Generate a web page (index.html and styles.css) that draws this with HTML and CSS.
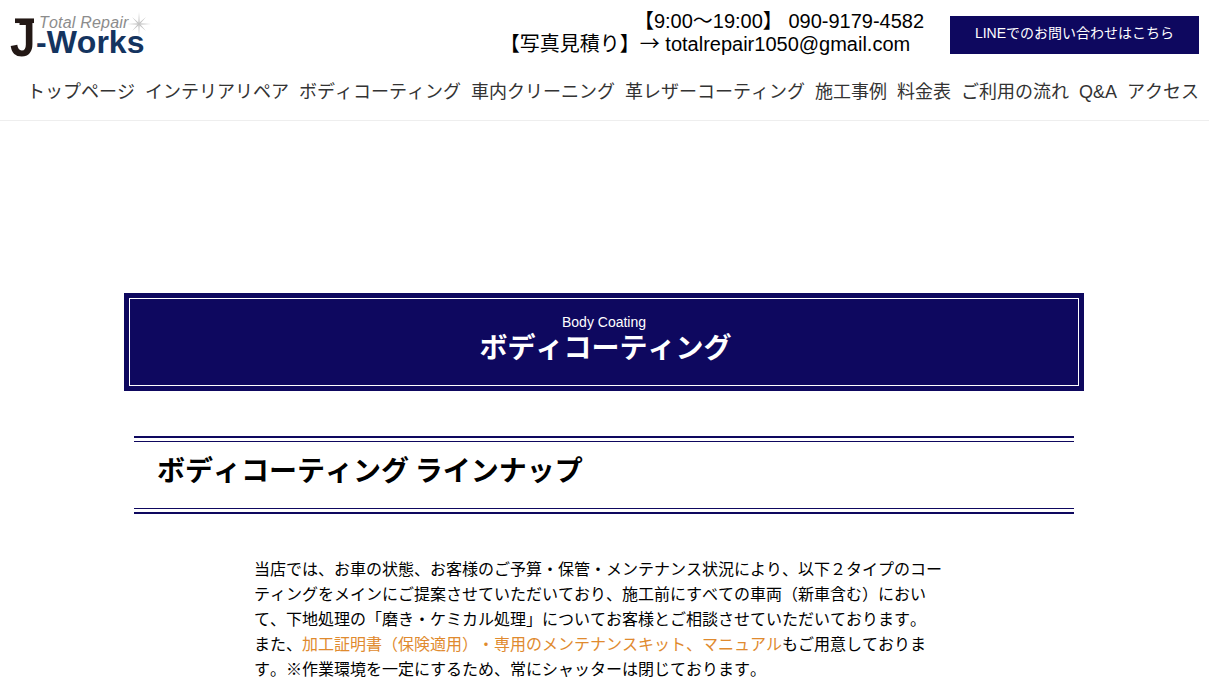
FILE: index.html
```html
<!DOCTYPE html>
<html lang="ja">
<head>
    <meta charset="UTF-8">
    <meta name="viewport" content="width=device-width, initial-scale=1.0">
    <title>ボディコーティング | J-Works</title>
    <link rel="stylesheet" href="styles.css">
</head>
<body>

    <header class="site-header">
        <div class="header-top">
            <a class="logo" href="#">
                <span class="logo-j">J</span>
                <span class="logo-text">
                    <span class="logo-sub">Total Repair</span>
                    <span class="logo-main">-Works</span>
                </span>
                <svg class="logo-star" viewBox="0 0 24 24" width="24" height="24">
                    <path d="M12 0 L12.5 11.5 L24 12 L12.5 12.5 L12 24 L11.5 12.5 L0 12 L11.5 11.5 Z" fill="#a9a9a9"/>
                    <path d="M5 5 L12.6 11.4 L19 19 L11.4 12.6 Z M19 5 L12.6 12.6 L5 19 L11.4 11.4 Z" fill="#c4c4c4"/>
                </svg>
            </a>
            <div class="contact">
                <p class="contact-tel">【9:00～19:00】 090-9179-4582</p>
                <p class="contact-mail">【写真見積り】<span class="arrow">→</span> totalrepair1050@gmail.com</p>
            </div>
            <a class="line-btn" href="#">LINEでのお問い合わせはこちら</a>
        </div>
        <nav class="global-nav">
            <a href="#">トップページ</a>
            <a href="#">インテリアリペア</a>
            <a href="#">ボディコーティング</a>
            <a href="#">車内クリーニング</a>
            <a href="#">革レザーコーティング</a>
            <a href="#">施工事例</a>
            <a href="#">料金表</a>
            <a href="#">ご利用の流れ</a>
            <a href="#">Q&amp;A</a>
            <a href="#">アクセス</a>
        </nav>
    </header>

    <main class="container">
        <div class="page-title">
            <div class="page-title-inner">
                <p class="page-title-en">Body Coating</p>
                <h1>ボディコーティング</h1>
            </div>
        </div>

        <h2 class="section-title">ボディコーティング ラインナップ</h2>

        <p class="lead">当店では、お車の状態、お客様のご予算・保管・メンテナンス状況により、以下２タイプのコーティングをメインにご提案させていただいており、施工前にすべての車両（新車含む）において、下地処理の「磨き・ケミカル処理」についてお客様とご相談させていただいております。<br>また、<span class="accent">加工証明書（保険適用）・専用のメンテナンスキット、マニュアル</span>もご用意しております。※作業環境を一定にするため、常にシャッターは閉じております。</p>
    </main>

</body>
</html>
```

FILE: styles.css
```css
body {
    margin: 0;
    font-family: "Liberation Sans", "Noto Sans CJK JP", sans-serif;
    font-kerning: none;
    background-color: #fff;
    color: #000;
    text-spacing-trim: space-all;
}

a {
    text-decoration: none;
}

p, h1, h2 {
    margin: 0;
}

.site-header {
    height: 120px;
    border-bottom: 1px solid #eee;
}

.header-top {
    display: flex;
    align-items: flex-start;
    padding: 7px 10px 0 10px;
}

.logo {
    display: flex;
    position: relative;
    width: 142px;
    height: 50px;
}

.logo-j {
    position: relative;
    font-size: 46px;
    line-height: 50px;
    height: 50px;
    margin-top: 6px;
    font-weight: bold;
    color: #231815;
    width: 26px;
    transform: scaleY(1.15);
}

/* top bar of the J */
.logo-j::before {
    content: "";
    position: absolute;
    left: 5px;
    top: 8px;
    width: 19px;
    height: 4px;
    background-color: #231815;
}

.logo-text {
    display: flex;
    flex-direction: column;
}

.logo-sub {
    font-size: 16px;
    line-height: 18px;
    font-style: italic;
    color: #8c8c8c;
    margin: 7px 0 0 3px;
    letter-spacing: 0.2px;
    white-space: nowrap;
}

.logo-main {
    font-size: 32px;
    line-height: 20px;
    font-weight: bold;
    color: #14345f;
    white-space: nowrap;
}

.logo-star {
    position: absolute;
    left: 117px;
    top: 5px;
}

.contact {
    flex: 1;
    text-align: center;
    font-size: 20px;
    line-height: 24px;
    padding-left: 320px;
    padding-top: 2px;
}

.contact-tel {
    height: 22px;
    padding-left: 148px;
}

.arrow {
    font-family: "Noto Sans CJK JP", sans-serif;
}

.line-btn {
    width: 249px;
    height: 38px;
    line-height: 34px;
    margin-top: 9px;
    margin-left: 12px;
    text-align: center;
    font-size: 14px;
    color: #fff;
    background-color: #0e085f;
}

.global-nav {
    display: flex;
    justify-content: flex-end;
    gap: 10px;
    padding: 22px 10px 0 0;
    font-size: 18px;
    line-height: 26px;
}

.global-nav a {
    color: #333;
    white-space: nowrap;
}

.container {
    width: 960px;
    margin: 172px 0 0 124px;
}

.page-title {
    border: 5px solid #0e085f;
    background-color: #0e085f;
}

.page-title-inner {
    border: 1px solid #fff;
    height: 86px;
    text-align: center;
    color: #fff;
}

.page-title-en {
    font-size: 14px;
    line-height: 18px;
    padding-top: 14px;
}

.page-title h1 {
    font-size: 28px;
    line-height: 36px;
    padding-left: 3px;
}

.section-title {
    margin: 50px 10px 0;
    padding: 0 23px;
    height: 66px;
    line-height: 60px;
    font-size: 28px;
    word-spacing: -2px;
    border-top: 1px solid #0e085f;
    border-bottom: 1px solid #0e085f;
    position: relative;
}

.section-title::before,
.section-title::after {
    content: "";
    position: absolute;
    left: 0;
    right: 0;
    height: 2px;
    background-color: #0e085f;
}

.section-title::before {
    top: -6px;
}

.section-title::after {
    bottom: -6px;
}

.lead {
    width: 690px;
    margin: 48px 0 0 130px;
    font-size: 16px;
    line-height: 25px;
}

.accent {
    color: #e08a2e;
}
```
